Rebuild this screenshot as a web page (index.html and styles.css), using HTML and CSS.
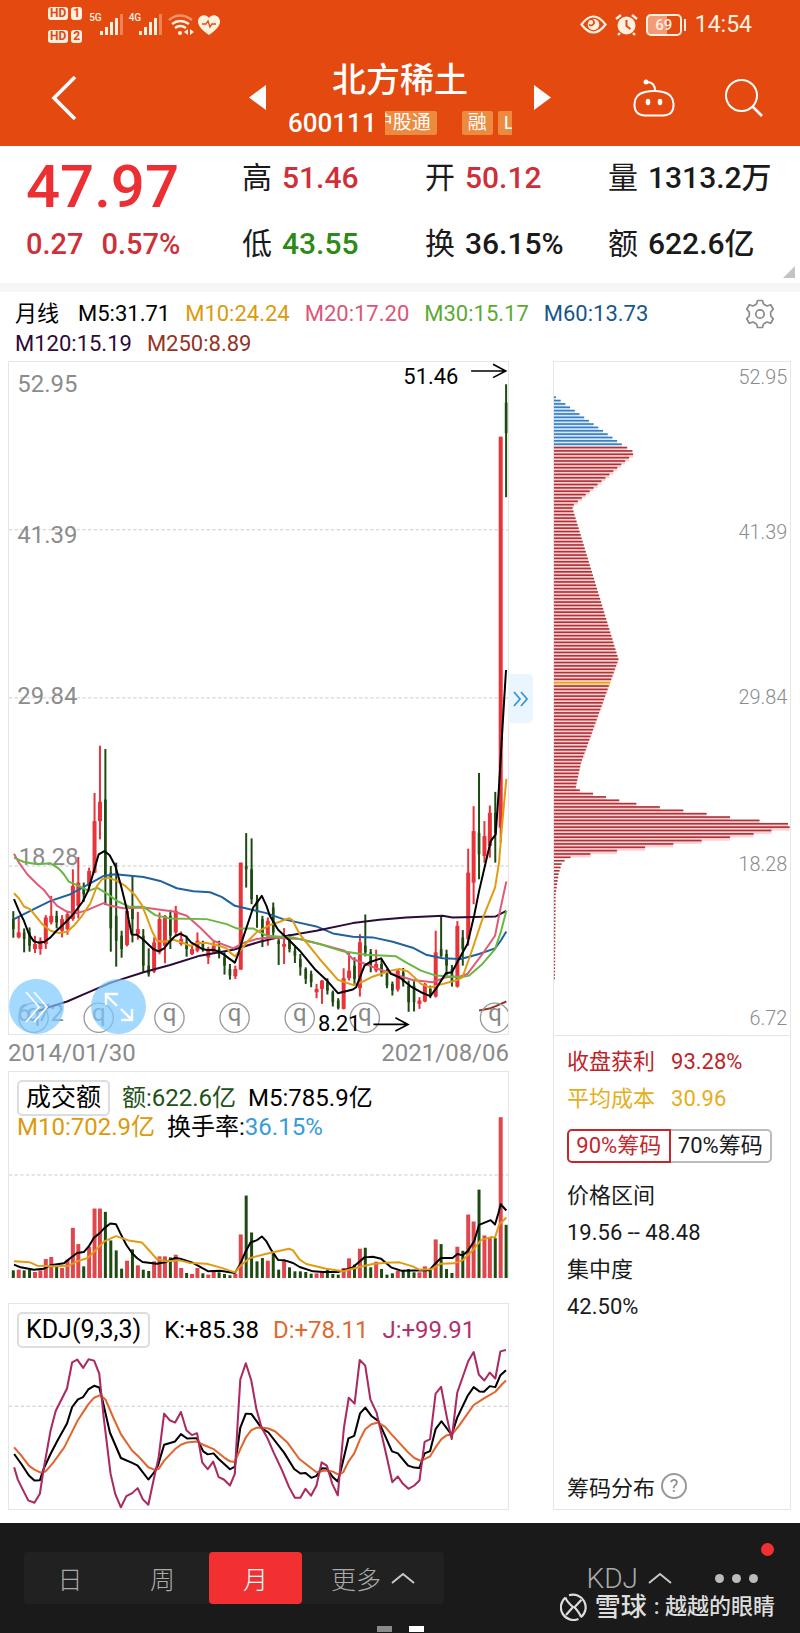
FILE: index.html
```html
<!DOCTYPE html>
<html lang="zh-CN">
<head>
    <meta charset="UTF-8">
    <meta name="viewport" content="width=device-width, initial-scale=1.0">
    <title>北方稀土 600111</title>
    <link rel="stylesheet" href="styles.css">
</head>
<body>
    <header class="header">
        <div class="status">
            <div class="hd">
                <span><b>HD</b><b>1</b></span>
                <span><b>HD</b><b>2</b></span>
            </div>
            <div class="signal">
                <small>5G</small>
                <svg width="23" height="21" viewBox="0 0 23 21" fill="#fff0e0"><rect y="17" width="3" height="4"/><rect x="5" y="13" width="3" height="8"/><rect x="10" y="8" width="3" height="13"/><rect x="15" y="4" width="3" height="17"/><rect x="20" width="3" height="21" opacity=".35"/></svg>
            </div>
            <div class="signal">
                <small>4G</small>
                <svg width="23" height="21" viewBox="0 0 23 21" fill="#fff0e0"><rect y="17" width="3" height="4"/><rect x="5" y="13" width="3" height="8"/><rect x="10" y="8" width="3" height="13"/><rect x="15" y="4" width="3" height="17"/><rect x="20" width="3" height="21" opacity=".35"/></svg>
            </div>
            <svg width="26" height="22" viewBox="0 0 26 22" fill="none" stroke="#fff0e0" stroke-width="2.4"><path d="M1 6Q12-3 24 6" opacity=".45"/><path d="M4 10q8-6 17 0M7 14q5-4 11 0"/><circle cx="12" cy="19" r="2" fill="#fff0e0" stroke="none"/><path d="M20 15v6l-4-3zM22 15v6l4-3z" fill="#fff0e0" stroke="none"/></svg>
            <svg class="heart" width="22" height="20" viewBox="0 0 22 20"><path d="M11 20C4 15 0 11 0 6.500C0 0 8-2 11 3C14-2 22 0 22 6.500C22 11 18 15 11 20z" fill="#fff0e0"/><path d="M4 9h4l2-3 2 6 2-3h4" fill="none" stroke="#e4490f" stroke-width="1.300"/></svg>
            <div class="status-right">
                <svg width="27" height="19" viewBox="0 0 27 19"><path d="M1.500 9.500Q13.500-6.500 25.500 9.500Q13.500 25.500 1.500 9.500z" fill="none" stroke="#fff0e0" stroke-width="2.200"/><circle cx="13.500" cy="9.500" r="5.800" fill="#fff0e0"/><path d="M10 4.500a3 3 0 1 1-1 5" fill="none" stroke="#e4490f" stroke-width="1.600"/></svg>
                <svg width="23" height="22" viewBox="0 0 23 22"><circle cx="11.500" cy="11.500" r="9" fill="#fff0e0"/><path d="M1 5l5-4M22 5l-5-4M5 19l-2 2M18 19l2 2" stroke="#fff0e0" stroke-width="2.400"/><path d="M11.500 6v6l4 3" fill="none" stroke="#e4490f" stroke-width="2"/></svg>
                <div class="battery">69</div>
                <time>14:54</time>
            </div>
        </div>
        <nav class="nav">
            <button class="icon-btn back" aria-label="返回">
                <svg width="26" height="44" viewBox="0 0 26 44" fill="none" stroke="#fff" stroke-width="3.600"><path d="M24 1L3 22L24 43"/></svg>
            </button>
            <div class="stock">
                <button class="icon-btn" aria-label="上一只"><svg width="17" height="25" viewBox="0 0 17 25"><path d="M17 0v25L0 12.500z" fill="#fff"/></svg></button>
                <div class="stock-info">
                    <h1>北方稀土</h1>
                    <div class="code">
                        <span>600111</span>
                        <div class="tags"><span class="tag first">沪股通</span><span class="tag">融</span><span class="tag">L</span></div>
                    </div>
                </div>
                <button class="icon-btn" aria-label="下一只"><svg width="17" height="25" viewBox="0 0 17 25"><path d="M0 0v25l17-12.500z" fill="#fff"/></svg></button>
            </div>
            <div class="tools">
                <button class="icon-btn" aria-label="助手"><svg width="42" height="38" viewBox="0 0 42 38" fill="none" stroke="#fff" stroke-width="2"><path d="M14 3q8 0 8 9"/><circle cx="13" cy="3" r="2.500" fill="#fff" stroke="none"/><path d="M12 13Q21 11 30 13Q40 15 40.500 25Q41 36 30 36.500H12Q1 36 1.500 25Q2 15 12 13z"/><ellipse cx="15" cy="23" rx="2.300" ry="3.300" fill="#fff" stroke="none"/><ellipse cx="27" cy="23" rx="2.300" ry="3.300" fill="#fff" stroke="none"/></svg></button>
                <button class="icon-btn" aria-label="搜索"><svg width="38" height="38" viewBox="0 0 38 38" fill="none" stroke="#fff" stroke-width="2"><circle cx="16.500" cy="16.500" r="15.500"/><path d="M27 27l10 10" stroke-width="2.600"/></svg></button>
            </div>
        </nav>
    </header>

    <section class="quote">
        <div class="price">47.97</div>
        <div><span>高</span><b class="up">51.46</b></div>
        <div><span>开</span><b class="up">50.12</b></div>
        <div><span>量</span><b>1313.2万</b></div>
        <div class="change up"><b>0.27</b><b>0.57%</b></div>
        <div><span>低</span><b class="down">43.55</b></div>
        <div><span>换</span><b>36.15%</b></div>
        <div><span>额</span><b>622.6亿</b></div>
    </section>

    <section class="legend">
        <div class="ma-list">
            <span class="cjk">月线</span>
            <span>M5:31.71</span>
            <span class="ma10">M10:24.24</span>
            <span class="ma20">M20:17.20</span>
            <span class="ma30">M30:15.17</span>
            <span class="ma60">M60:13.73</span>
            <span class="ma120">M120:15.19</span>
            <span class="ma250">M250:8.89</span>
        </div>
        <button class="icon-btn gear" aria-label="设置">
            <svg width="30" height="30" viewBox="0 0 30 30" fill="none" stroke="#8a8a8a" stroke-width="1.700" stroke-linejoin="round"><path d="M12.500 1.500h5l1 3.500 3.500 2 3.700-1.300 2.600 4.500-2.600 2.800v4l2.600 2.800-2.600 4.500L22 23l-3.500 2-1 3.500h-5l-1-3.500L8 23l-3.700 1.300-2.600-4.500L4.300 17v-4L1.700 10.200l2.600-4.500L8 7l3.500-2z"/><circle cx="15" cy="15" r="4.200"/></svg>
        </button>
    </section>

    <main class="charts">
        <div class="left">
            <div class="panel kline">
                <svg id="kline" viewBox="25 -1077 1502 2024" preserveAspectRatio="none">
                    <path class="grid" d="M25-572H1527M25-66H1527M25 440H1527"/>
                    <g class="axis">
                        <text x="50" y="-986">52.95</text>
                        <text x="50" y="-533">41.39</text>
                        <text x="50" y="-48">29.84</text>
                        <text x="54" y="438">18.28</text>
                        <text x="50" y="907">6.72</text>
                    </g>
                </svg>
                <button class="round" aria-label="展开"><svg width="28" height="34" viewBox="0 0 28 34" fill="none" stroke="#fff" stroke-width="1.600"><path d="M3 2l13 15L3 32M11 2l13 15L11 32"/></svg></button>
                <button class="round full" aria-label="全屏"><svg width="30" height="30" viewBox="0 0 30 30" fill="none" stroke="#fff" stroke-width="2.400"><path d="M13 14L2 3M2 13V2h12M17 17l11 11M28 17v11H17"/></svg></button>
                <button class="handle" aria-label="收起筹码"><svg width="16" height="16" viewBox="0 0 16 16" fill="none" stroke="#3a94d0" stroke-width="1.800"><path d="M1 1l6 7-6 7M8 1l6 7-6 7"/></svg></button>
            </div>
            <div class="dates"><time>2014/01/30</time><time>2021/08/06</time></div>
            <div class="panel volume">
                <svg id="volume" viewBox="25 30 1502 620" preserveAspectRatio="none">
                    <path class="grid" d="M25 340H1527"/>
                </svg>
                <div class="caption">
                    <button class="pick">成交额</button>
                    <span class="vol">额:622.6亿</span>
                    <span>M5:785.9亿</span>
                    <span class="ma10">M10:702.9亿</span>
                    <span>换手率:<span class="rate">36.15%</span></span>
                </div>
            </div>
            <div class="panel kdj">
                <svg id="kdj" viewBox="24 37 1454 619" preserveAspectRatio="none">
                    <path class="grid" d="M24 346H1478"/>
                </svg>
                <div class="caption">
                    <button class="pick">KDJ(9,3,3)</button>
                    <span>K:+85.38</span>
                    <span class="d">D:+78.11</span>
                    <span class="j">J:+99.91</span>
                </div>
            </div>
        </div>

        <aside class="panel chips">
            <svg id="chips" viewBox="0 1083 713 2019" preserveAspectRatio="none">
                <g class="axis">
                    <text x="705" y="1150">52.95</text>
                    <text x="705" y="1613">41.39</text>
                    <text x="705" y="2110">29.84</text>
                    <text x="705" y="2609">18.28</text>
                    <text x="705" y="3072">6.72</text>
                </g>
            </svg>
            <div class="chip-info">
                <p class="profit"><span>收盘获利</span><span>93.28%</span></p>
                <p class="cost"><span>平均成本</span><span>30.96</span></p>
                <div class="switch">
                    <button class="on">90%筹码</button><button>70%筹码</button>
                </div>
                <p>价格区间</p>
                <p>19.56 -- 48.48</p>
                <p>集中度</p>
                <p>42.50%</p>
            </div>
            <div class="chip-foot">筹码分布 <button class="help" aria-label="帮助">?</button></div>
        </aside>
    </main>

    <footer class="footer">
        <div class="bar">
            <div class="periods">
                <button>日</button>
                <button>周</button>
                <button class="active">月</button>
                <button class="more">更多 <svg width="24" height="12" viewBox="0 0 24 12" fill="none" stroke="#c8c8c8" stroke-width="2"><path d="M1 11L12 2l11 9"/></svg></button>
            </div>
            <button class="index-btn">KDJ <svg width="24" height="12" viewBox="0 0 24 12" fill="none" stroke="#c8c8c8" stroke-width="2"><path d="M1 11L12 2l11 9"/></svg></button>
            <button class="dots" aria-label="更多功能"><i></i><i></i><i></i></button>
        </div>
        <div class="pager"><i></i><i class="current"></i></div>
        <div class="watermark">
            <svg width="28" height="28" viewBox="0 0 28 28" fill="none" stroke="#ddd" stroke-width="2.200"><path d="M9 2.300a12.700 12.700 0 0 1 12 21.900M5.500 4.500a12.700 12.700 0 0 0 13 21.500"/><path d="M5.500 4.500q1 4 7.500 9.500l-7 8M21 24.200q-1-4-6.500-10l7-7.500" stroke-width="2.200"/></svg>
            <strong>雪球</strong><span>: 越越的眼睛</span>
        </div>
    </footer>

    <script src="charts.js"></script>
</body>
</html>
```
FILE: styles.css
```css
* {
    box-sizing: border-box;
}

body {
    margin: 0;
    background-color: #fff;
    color: #1a1a1a;
    font-family: Roboto, "Noto Sans CJK SC", sans-serif;
}

button {
    margin: 0;
    padding: 0;
    border: none;
    background: none;
    color: inherit;
    font: inherit;
    cursor: pointer;
}

svg {
    display: block;
}

b {
    font-weight: 500;
}

/* header */
.header {
    background-color: #e4490f;
    color: #fff;
}

.status {
    display: flex;
    align-items: center;
    height: 49px;
    padding: 0 48px;
    color: #fff0e0;
}

.hd {
    display: flex;
    flex-direction: column;
    gap: 10px;
    margin-right: 7px;
}

.hd span {
    display: flex;
    gap: 3px;
}

.hd b {
    padding: 0 2px;
    border-radius: 3px;
    background-color: #fff0e0;
    color: #e4490f;
    font-size: 12px;
    font-weight: 700;
    line-height: 13px;
}

.signal {
    display: flex;
    margin-right: 6px;
}

.signal small {
    font-size: 10px;
    font-weight: 500;
    line-height: 8px;
}

.signal svg {
    margin-left: -2px;
}

.heart {
    margin-left: 4px;
}

.status-right {
    display: flex;
    align-items: center;
    gap: 8px;
    margin-left: auto;
}

.battery {
    position: relative;
    width: 36px;
    height: 22px;
    margin-right: 5px;
    border: 2px solid #fff0e0;
    border-radius: 5px;
    background: linear-gradient(90deg, #f39a78 60%, transparent 60%);
    font-size: 15px;
    font-weight: 500;
    line-height: 18px;
    text-align: center;
}

.battery::after {
    content: "";
    position: absolute;
    top: 3px;
    right: -6px;
    width: 2px;
    height: 12px;
    background-color: #fff0e0;
}

.status time {
    font-size: 23px;
}

.nav {
    display: grid;
    grid-template-columns: 1fr auto 1fr;
    align-items: center;
    height: 97px;
    padding: 0 37px 0 51px;
}

.nav .back {
    justify-self: start;
}

.stock {
    display: flex;
    align-items: center;
    gap: 22px;
    margin-right: 14px;
}

.stock-info {
    width: 224px;
    text-align: center;
}

.stock h1 {
    margin: 0;
    font-size: 34px;
    font-weight: 500;
    line-height: 50px;
}

.code {
    display: flex;
    align-items: center;
    gap: 8px;
    font-size: 26px;
    font-weight: 500;
    line-height: 36px;
}

.tags {
    display: flex;
    flex: 1;
    gap: 5px;
    overflow: hidden;
}

.tag {
    flex: none;
    padding: 0 6px;
    border-radius: 2px;
    background-color: #ec8a3f;
    font-size: 19px;
    font-weight: 400;
    line-height: 24px;
}

.tag.first {
    margin-right: 20px;
    margin-left: -17px;
}

.tools {
    display: flex;
    justify-content: flex-end;
    gap: 50px;
}

/* quote */
.quote {
    position: relative;
    display: grid;
    grid-template-columns: 216fr 183fr 183fr 192fr;
    grid-template-rows: 62px 70px;
    align-items: center;
    padding: 1px 0 4px 26px;
    border-bottom: 9px solid #f6f6f6;
    font-size: 30px;
    line-height: 44px;
    white-space: nowrap;
}

.quote span {
    margin-right: 10px;
}

.quote::after {
    content: "";
    position: absolute;
    right: 5px;
    bottom: 5px;
    border-bottom: 12px solid #c4c4c4;
    border-left: 12px solid transparent;
}

.price {
    align-self: end;
    color: #ec2f33;
    font-size: 60px;
    font-weight: 500;
}

.change {
    display: flex;
    gap: 18px;
    font-size: 29px;
}

.up {
    color: #cf2f38;
}

.down {
    color: #2c8a15;
}

/* legend */
.legend {
    display: flex;
    align-items: flex-start;
    justify-content: space-between;
    padding: 7px 25px 2px 15px;
    color: #000;
    font-size: 22px;
    line-height: 30px;
}

.ma-list {
    display: flex;
    flex: 1;
    flex-wrap: wrap;
    column-gap: 15px;
    max-width: 670px;
}

.cjk {
    margin-right: 4px;
}

.ma10 { color: #dc9a0c; }
.ma20 { color: #dc5677; }
.ma30 { color: #5caa30; }
.ma60 { color: #17568c; }
.ma120 { color: #2d0b38; }
.ma250 { color: #963325; }

/* charts */
.charts {
    display: grid;
    grid-template-columns: 501fr 238fr;
    gap: 44px;
    padding: 0 9px 13px 8px;
}

.panel {
    border: 1px solid #e6e6e6;
}

.panel > svg {
    width: 100%;
    height: auto;
}

.kline {
    position: relative;
}

.grid {
    fill: none;
    stroke: #ccc;
    stroke-width: 3;
    stroke-dasharray: 10 7;
}

.axis {
    fill: #8c8c8c;
    font-size: 72px;
}

.line {
    fill: none;
    stroke-width: 6;
    stroke-linejoin: round;
}

.mark circle {
    fill: none;
    stroke: #999;
    stroke-width: 4;
}

.mark text {
    fill: #888;
    font-size: 72px;
    text-anchor: middle;
}

.note {
    font-size: 66px;
}

.arrow {
    fill: none;
    stroke: #000;
    stroke-width: 5;
}

.round {
    position: absolute;
    bottom: 0;
    left: 0;
    display: grid;
    place-items: center;
    width: 55px;
    height: 55px;
    border-radius: 50%;
    background-color: rgba(124, 199, 255, 0.7);
}

.round.full {
    left: 82px;
}

.handle {
    position: absolute;
    top: 312px;
    left: 100%;
    display: grid;
    place-items: center;
    width: 25px;
    height: 49px;
    border-radius: 0 5px 5px 0;
    background-color: #ebf5fd;
}

.dates {
    display: flex;
    justify-content: space-between;
    color: #8a8a8a;
    font-size: 24px;
    line-height: 36px;
}

.volume,
.kdj {
    display: grid;
}

.volume {
    border-bottom: none;
}

.kdj {
    margin-top: 25px;
}

.kdj > svg {
    aspect-ratio: 499 / 205;
}

.volume > *,
.kdj > * {
    grid-area: 1 / 1;
}

.caption {
    display: flex;
    flex-wrap: wrap;
    align-content: flex-start;
    align-items: center;
    column-gap: 12px;
    padding: 8px;
    color: #000;
    font-size: 24px;
    line-height: 22px;
}

.kdj .caption {
    column-gap: 14px;
}

.pick {
    padding: 0 7px;
    border: 2px solid #ddd;
    border-radius: 5px;
    font-size: 25px;
    line-height: 32px;
}

.caption .vol {
    color: #1f5218;
}

.rate {
    color: #379bd8;
}

.caption .d {
    color: #dd6a31;
}

.caption .j {
    color: #b0316b;
}

/* chip distribution */
.chips {
    display: flex;
    flex-direction: column;
}

.chips > svg {
    aspect-ratio: 236 / 673;
}

.chips .axis {
    font-size: 60px;
    font-weight: 300;
    text-anchor: end;
}

.chip-info {
    flex: 1;
    padding: 7px 13px;
    border-top: 1px solid #e6e6e6;
    font-size: 22px;
    line-height: 37px;
}

.chip-info p {
    display: flex;
    gap: 16px;
    margin: 0;
}

.profit {
    color: #bf2329;
}

.cost {
    color: #e6ae1c;
}

.switch {
    display: flex;
    margin: 12px 5px 14px 0;
}

.switch button {
    flex: 1;
    border: 2px solid #bbb;
    border-left: none;
    border-radius: 0 5px 5px 0;
    line-height: 30px;
    white-space: nowrap;
}

.switch .on {
    border: 2px solid #c4272d;
    border-radius: 5px 0 0 5px;
    color: #c4272d;
}

.chip-foot {
    display: flex;
    align-items: center;
    gap: 6px;
    padding: 0 13px 7px;
    font-size: 22px;
}

.help {
    width: 26px;
    height: 26px;
    border: 2px solid #999;
    border-radius: 50%;
    color: #888;
    font-size: 18px;
    line-height: 22px;
}

/* footer */
.footer {
    position: relative;
    height: 111px;
    padding: 29px 42px 0 24px;
    background-color: #1a1a1a;
    color: #aaa;
}

.bar {
    display: flex;
    align-items: center;
}

.periods {
    display: grid;
    grid-template-columns: 92px 93px 93px 142px;
    height: 52px;
    border-radius: 4px;
    background-color: #212121;
    font-size: 25px;
    font-weight: 300;
}

.periods .active {
    border-radius: 4px;
    background-color: #f23031;
    color: #fff;
}

.more,
.index-btn {
    display: flex;
    align-items: center;
    justify-content: center;
    gap: 10px;
}

.index-btn {
    margin-left: auto;
    font-size: 28px;
    font-weight: 300;
}

.dots {
    display: flex;
    gap: 8px;
    margin-left: 43px;
}

.dots i {
    width: 9px;
    height: 9px;
    border-radius: 50%;
    background-color: #bbb;
}

.footer::after {
    content: "";
    position: absolute;
    top: 20px;
    right: 26px;
    width: 13px;
    height: 13px;
    border-radius: 50%;
    background-color: #f23031;
}

.pager {
    display: flex;
    justify-content: center;
    gap: 17px;
    margin: 22px 0 0 18px;
}

.pager i {
    width: 15px;
    height: 6px;
    background-color: #8a8a8a;
}

.pager .current {
    background-color: #fff;
}

.watermark {
    position: absolute;
    right: 25px;
    bottom: 9px;
    display: flex;
    align-items: center;
    gap: 7px;
    color: #ddd;
    font-size: 22px;
    font-weight: 500;
    line-height: 36px;
}

.watermark strong {
    font-size: 26px;
    font-weight: 500;
}
```
FILE: charts.js
```js
const NS = 'http://www.w3.org/2000/svg';
const RED = '#e8333a';
const GREEN = '#1d4a10';
const STEP = 16.3;

// [color, high, body top, body bottom, low], one row per month
const candles = [
    ['g', 576, 600, 630, 656], ['r', 590, 640, 655, 658], ['g', 628, 640, 660, 700], ['g', 625, 640, 680, 698],
    ['r', 650, 675, 690, 702], ['r', 655, 665, 690, 707], ['r', 588, 595, 675, 690], ['r', 530, 590, 610, 616],
    ['g', 575, 590, 610, 628], ['r', 588, 600, 635, 655], ['r', 575, 585, 630, 647], ['r', 450, 500, 600, 605],
    ['r', 413, 490, 560, 598], ['g', 490, 505, 525, 548], ['r', 445, 455, 500, 512], ['r', 220, 305, 460, 462],
    ['r', 78, 247, 305, 360], ['g', 88, 240, 480, 558], ['g', 440, 460, 628, 698], ['g', 430, 590, 665, 743],
    ['g', 635, 650, 690, 716], ['r', 565, 575, 678, 682], ['g', 470, 560, 600, 670], ['r', 578, 630, 645, 662],
    ['g', 630, 650, 740, 760], ['g', 688, 740, 765, 773], ['r', 655, 670, 758, 762], ['r', 580, 600, 700, 706],
    ['r', 588, 590, 680, 733], ['g', 572, 590, 650, 690], ['r', 560, 575, 640, 650], ['r', 637, 660, 675, 680],
    ['g', 650, 670, 690, 713], ['r', 680, 690, 705, 708], ['r', 640, 665, 695, 700], ['g', 665, 675, 690, 698],
    ['r', 683, 695, 715, 735], ['r', 668, 680, 700, 705], ['g', 665, 690, 705, 718], ['g', 700, 715, 740, 767],
    ['g', 735, 750, 770, 782], ['r', 740, 750, 772, 780], ['r', 430, 430, 752, 752], ['g', 341, 440, 450, 505],
    ['g', 357, 450, 540, 555], ['g', 527, 545, 580, 626], ['g', 590, 600, 650, 684], ['r', 595, 605, 650, 680],
    ['g', 550, 565, 640, 650], ['g', 655, 665, 675, 738], ['r', 627, 675, 683, 735], ['g', 645, 660, 690, 700],
    ['g', 680, 695, 710, 732], ['g', 705, 720, 745, 770], ['g', 745, 750, 780, 795], ['g', 755, 765, 790, 805],
    ['r', 795, 810, 820, 838], ['r', 783, 785, 810, 855], ['g', 778, 790, 815, 827], ['g', 815, 820, 850, 863],
    ['g', 838, 845, 868, 872], ['r', 748, 778, 870, 872], ['r', 700, 755, 778, 785], ['g', 715, 740, 780, 800],
    ['r', 645, 670, 808, 833], ['g', 586, 680, 700, 712], ['g', 690, 700, 740, 760], ['r', 692, 735, 755, 760],
    ['g', 720, 735, 760, 773], ['g', 750, 765, 800, 808], ['g', 788, 795, 815, 830], ['r', 752, 755, 812, 818],
    ['g', 747, 760, 790, 803], ['g', 785, 800, 850, 879], ['g', 787, 800, 850, 878], ['r', 835, 845, 855, 870],
    ['r', 792, 795, 848, 850], ['g', 800, 810, 830, 838], ['r', 635, 700, 833, 836], ['g', 590, 690, 712, 713],
    ['g', 692, 705, 740, 770], ['g', 738, 750, 790, 803], ['r', 606, 620, 803, 806], ['g', 633, 655, 690, 740],
    ['r', 388, 460, 660, 680], ['r', 260, 335, 490, 555], ['g', 160, 340, 405, 480], ['r', 305, 350, 410, 430],
    ['r', 258, 280, 380, 415], ['g', 217, 280, 340, 430], ['r', -852, -852, 325, 370], ['g', -1010, -955, -863, -670]
];

const volumes = [
    627, 625, 627, 625, 632, 627, 593, 587, 615, 620, 595, 499, 548, 615, 556, 441, 441, 451, 537, 567, 622, 598, 564,
    612, 625, 629, 600, 585, 585, 588, 580, 620, 635, 638, 620, 636, 640, 632, 633, 638, 642, 638, 519, 402, 513, 600,
    590, 598, 575, 625, 597, 618, 630, 630, 632, 637, 636, 632, 625, 638, 640, 620, 591, 610, 562, 559, 618, 601, 623,
    640, 636, 628, 628, 623, 633, 633, 615, 625, 534, 548, 623, 635, 556, 568, 459, 480, 384, 522, 530, 530, 166, 490
];

const klineLines = {
    '#1f629c': '40,600 100,570 150,545 210,525 260,498 310,470 345,465 430,473 480,485 530,507 580,516 630,519 665,533 705,560 740,568 800,582 850,600 950,622 1000,643 1060,653 1120,655 1180,668 1240,686 1280,707 1330,718 1385,720 1440,705 1488,688 1505,665 1522,637',
    '#2d0b38': '105,880 130,870 200,848 260,822 330,792 430,760 510,738 600,710 700,692 780,668 850,652 950,635 1060,612 1140,602 1220,595 1330,590 1360,595 1490,592 1522,575',
    '#e05a78': '40,403 55,430 80,465 110,495 130,512 150,538 170,560 200,578 230,582 260,573 290,560 310,552 330,560 370,567 430,565 520,577 560,590 600,625 640,665 700,688 730,672 770,660 810,655 900,660 960,675 1035,695 1060,720 1130,748 1180,765 1240,783 1300,790 1340,775 1385,772 1405,765 1450,705 1488,650 1505,565 1522,487',
    '#68b840': '40,415 70,428 110,435 150,432 175,448 190,465 205,487 235,500 265,515 290,505 315,520 350,545 385,562 430,563 465,588 510,598 620,600 680,615 710,628 760,628 800,650 880,655 960,675 1030,697 1100,707 1190,712 1220,730 1265,755 1310,770 1385,775 1410,770 1450,735 1488,690 1505,640 1522,575',
    '#e09c12': '40,522 55,538 70,562 88,570 105,590 125,615 150,635 175,642 200,638 220,620 245,590 270,552 290,500 305,480 325,475 350,485 375,500 405,528 425,558 440,595 455,635 470,665 490,668 520,662 545,670 570,680 595,672 620,672 650,678 680,688 690,700 705,712 725,690 745,665 770,640 810,618 840,608 868,597 878,603 900,645 960,720 1015,783 1060,798 1090,788 1115,775 1150,763 1175,755 1200,750 1225,757 1245,775 1265,795 1293,806 1320,798 1350,790 1370,785 1390,775 1420,690 1450,600 1488,505 1500,430 1508,330 1522,178',
    '#000': '40,540 55,575 70,605 85,645 100,667 116,671 132,668 150,655 165,638 182,622 197,608 214,590 230,570 247,547 263,515 279,460 295,405 312,395 328,408 345,440 361,495 377,560 394,646 410,647 427,660 443,675 459,690 475,697 492,688 508,668 524,652 540,644 557,652 573,670 590,680 606,690 622,693 639,692 655,697 671,706 687,718 705,731 715,705 730,655 745,610 760,565 770,552 786,530 800,560 810,590 835,632 870,665 900,695 945,750 985,788 1015,823 1060,812 1070,805 1095,740 1110,730 1145,718 1175,765 1200,775 1235,803 1265,820 1293,832 1310,810 1340,763 1358,760 1385,710 1405,675 1425,590 1440,515 1475,365 1490,345 1500,200 1513,-20 1521,-150',
    '#963325': '1440,875 1475,868 1490,862 1522,848'
};

const volumeLines = {
    '#000': '40,610 60,618 100,625 130,622 150,612 190,606 210,590 230,575 250,572 265,555 280,530 298,515 312,500 330,486 347,488 360,515 378,550 395,575 410,590 427,602 470,607 495,603 525,590 540,592 580,605 625,630 660,628 705,635 720,610 735,575 752,543 770,537 786,525 800,540 815,567 835,596 855,597 880,605 900,617 940,630 970,632 1015,632 1060,618 1075,605 1095,588 1120,586 1145,592 1175,618 1205,628 1290,627 1305,610 1325,590 1360,590 1375,578 1390,582 1405,570 1425,540 1440,490 1475,476 1488,489 1498,455 1505,428 1522,447',
    '#e09c12': '40,600 88,603 110,613 160,615 205,613 230,600 262,590 290,562 312,540 347,524 385,537 425,543 445,565 470,593 500,600 540,597 570,605 620,607 660,618 705,633 725,610 750,590 800,577 868,562 880,567 900,595 920,608 980,622 1030,630 1080,617 1120,608 1160,604 1200,603 1240,615 1260,625 1295,624 1325,607 1365,606 1390,597 1420,568 1445,537 1475,527 1488,528 1500,490 1522,468'
};

const kdjLines = {
    '#000': '39,490 60,520 82,555 98,570 114,569 125,535 145,490 165,450 193,398 208,348 225,325 240,318 255,295 272,284 287,289 297,330 318,425 350,502 383,517 399,525 430,567 447,545 458,525 476,462 508,452 525,430 543,443 571,442 590,482 603,491 620,488 635,505 668,536 682,528 698,410 714,368 730,369 745,390 760,412 780,425 825,485 855,535 873,549 888,547 905,562 920,556 935,533 950,534 968,560 982,573 993,530 1013,443 1030,435 1047,367 1062,350 1080,375 1100,390 1120,435 1140,482 1157,488 1187,525 1205,531 1220,532 1235,488 1251,481 1267,415 1284,391 1314,432 1330,380 1360,315 1378,288 1395,301 1408,302 1425,285 1441,288 1456,252 1472,237',
    '#e0662f': '39,470 60,495 82,525 98,537 116,546 130,543 150,520 185,470 225,387 255,340 272,320 290,312 305,325 330,385 350,430 383,480 399,495 430,530 447,537 460,535 476,510 508,475 525,462 543,455 571,452 590,462 620,475 650,500 668,512 682,514 698,475 714,440 730,418 745,411 760,410 780,413 800,422 835,455 870,505 920,545 945,540 968,543 985,553 998,545 1013,513 1030,488 1047,445 1062,415 1080,400 1100,395 1120,408 1140,432 1187,485 1205,502 1225,511 1251,497 1270,465 1284,445 1300,433 1314,432 1335,405 1378,342 1408,322 1441,302 1460,280 1472,268',
    '#a92b62': '39,530 50,568 80,630 98,637 114,610 125,535 145,420 160,360 193,292 208,213 223,205 240,230 256,204 272,208 287,247 300,380 320,550 334,612 350,651 366,617 383,608 399,593 414,627 430,643 445,570 460,500 476,368 492,388 508,395 525,363 541,418 557,433 572,427 587,515 603,536 619,513 635,560 650,567 668,585 682,550 690,400 698,265 714,216 730,268 745,355 760,410 776,440 795,485 820,540 840,590 857,622 873,622 888,595 904,616 920,585 935,515 950,525 966,580 982,615 990,520 1000,410 1014,320 1031,338 1046,206 1062,223 1077,325 1095,365 1105,410 1125,500 1141,575 1157,558 1172,580 1188,595 1205,585 1220,570 1235,453 1251,445 1267,308 1283,287 1300,380 1314,445 1330,305 1362,210 1378,182 1393,250 1409,268 1425,244 1441,262 1456,180 1472,176'
};

function add(parent, name, attrs, text) {
    const el = document.createElementNS(NS, name);
    for (const key in attrs) {
        el.setAttribute(key, attrs[key]);
    }
    if (text) {
        el.textContent = text;
    }
    parent.appendChild(el);
    return el;
}

function bar(parent, x, y, width, height, fill) {
    add(parent, 'rect', { x: x, y: y, width: width, height: height, fill: fill });
}

function drawLines(svg, lines) {
    for (const color in lines) {
        add(svg, 'polyline', { class: 'line', points: lines[color], stroke: color });
    }
}

// K line
const kline = document.getElementById('kline');
candles.forEach(([type, high, top, bottom, low], i) => {
    const x = 38 + i * STEP;
    const color = type === 'r' ? RED : GREEN;
    const half = type === 'r' ? 6 : 4;
    bar(kline, x - 3, high, 6, low - high, color);
    bar(kline, x - half, top, half * 2, bottom - top, color);
});
drawLines(kline, klineLines);
[99, 295, 508, 704, 900, 1096, 1488].forEach((x) => {
    const g = add(kline, 'g', { class: 'mark' });
    add(g, 'circle', { cx: x, cy: 897, r: 44 });
    add(g, 'text', { x: x, y: 908 }, 'q');
});
add(kline, 'text', { class: 'note', x: 1212, y: -1010 }, '51.46');
add(kline, 'path', { class: 'arrow', d: 'M1416-1050H1520M1482-1070L1520-1050L1482-1030' });
add(kline, 'text', { class: 'note', x: 955, y: 937 }, '8.21');
add(kline, 'path', { class: 'arrow', d: 'M1122 917H1226M1188 897L1226 917L1188 937' });

// volume
const volume = document.getElementById('volume');
volumes.forEach((y, i) => {
    const red = candles[i][0] === 'r';
    const w = red ? 12 : 9;
    bar(volume, 38 + i * STEP - w / 2, y, w, 650 - y, red ? '#e0474d' : GREEN);
});
drawLines(volume, volumeLines);

// KDJ
drawLines(document.getElementById('kdj'), kdjLines);

// chip distribution, [row, width] turning points
const turns = [
    [0, 6], [14, 205], [16, 237], [17, 239], [32, 60], [33, 56], [78, 195], [109, 81], [116, 66], [117, 78], [118, 118],
    [119, 157], [120, 197], [121, 249], [122, 320], [125, 532], [126, 621], [127, 707], [128, 712], [129, 657],
    [130, 603], [131, 532], [132, 446], [135, 190], [136, 110], [137, 50], [138, 32], [139, 23], [142, 14], [148, 5],
    [174, 3]
];
const chips = document.getElementById('chips');
for (let t = 0; t < turns.length - 1; t++) {
    const [from, w1] = turns[t];
    const [to, w2] = turns[t + 1];
    for (let n = from; n < to; n++) {
        const w = w1 + (w2 - w1) * (n - from) / (to - from);
        const y = 1189 + n * 10.077;
        let colors = ['#b03238', '#fbd2d3'];
        if (n < 15) colors = ['#3c7cc0', '#d3eafa'];
        if (n === 85) colors = ['#e0a818', '#f6dfa0'];
        if (n < 137) bar(chips, 0, y, w, 10.077, colors[1]);
        bar(chips, 0, y - 3, w, 5, colors[0]);
    }
}
```
